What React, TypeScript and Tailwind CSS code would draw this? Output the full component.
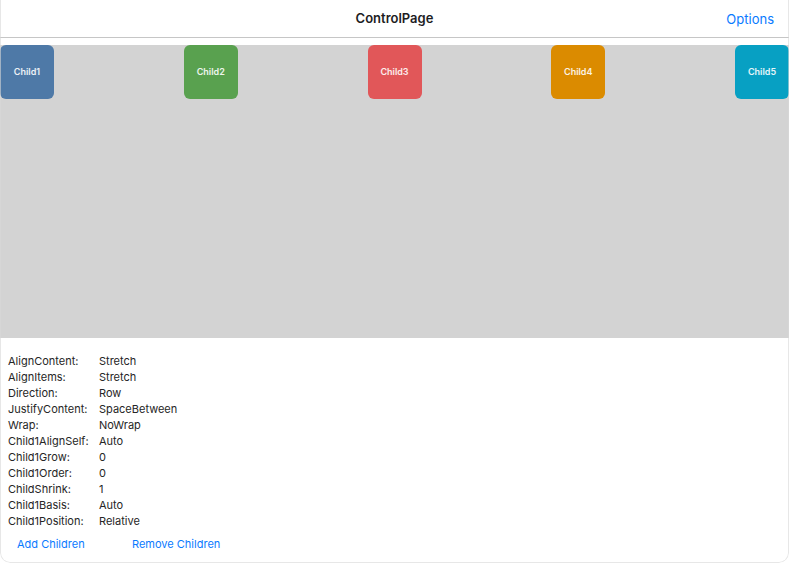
const children = [
  { name: 'Child1', color: 'bg-[#4e79a7]' },
  { name: 'Child2', color: 'bg-[#59a14f]' },
  { name: 'Child3', color: 'bg-[#e15759]' },
  { name: 'Child4', color: 'bg-[#db8b00]' },
  { name: 'Child5', color: 'bg-[#07a0c3]' },
]

const props = [
  ['AlignContent:', 'Stretch'],
  ['AlignItems:', 'Stretch'],
  ['Direction:', 'Row'],
  ['JustifyContent:', 'SpaceBetween'],
  ['Wrap:', 'NoWrap'],
  ['Child1AlignSelf:', 'Auto'],
  ['Child1Grow:', '0'],
  ['Child1Order:', '0'],
  ['ChildShrink:', '1'],
  ['Child1Basis:', 'Auto'],
  ['Child1Position:', 'Relative'],
]

export default function App() {
  return (
    <div className="relative w-[789px] h-[563px] bg-white rounded-b-[10px] overflow-hidden flex flex-col font-['Inter',sans-serif] text-[#1d1d1f]">
      {/* Nav bar */}
      <div className="relative h-[38px] shrink-0 border-b border-[#c6c6c6] flex items-center justify-center">
        <span className="text-[13px] font-semibold">ControlPage</span>
        <span className="absolute right-[15px] top-[10px] text-[13px] text-[#0a7aff]">Options</span>
      </div>

      {/* Flex playground */}
      <div className="mt-[7px] h-[293px] shrink-0 bg-[#d3d3d3] flex flex-row justify-between items-start">
        {children.map((c) => (
          <div
            key={c.name}
            className={`w-[54px] h-[54px] ${c.color} rounded-[6px] flex items-center justify-center text-[9px] font-semibold text-white/90`}
          >
            {c.name}
          </div>
        ))}
      </div>

      {/* Property list */}
      <div className="pt-[15px] pl-[8px] text-[11px] text-[#262626]">
        {props.map(([k, v]) => (
          <div key={k} className="flex h-[16px] items-center">
            <span className="w-[91px]">{k}</span>
            <span>{v}</span>
          </div>
        ))}
        <div className="flex h-[16px] items-center mt-[7px] pl-[9px] text-[#0a7aff]">
          <span className="w-[115px]">Add Children</span>
          <span>Remove Children</span>
        </div>
      </div>

      {/* Window edge */}
      <div className="pointer-events-none absolute inset-0 rounded-b-[10px] border-x border-b border-[#d8d8d8]/60" />
    </div>
  )
}
